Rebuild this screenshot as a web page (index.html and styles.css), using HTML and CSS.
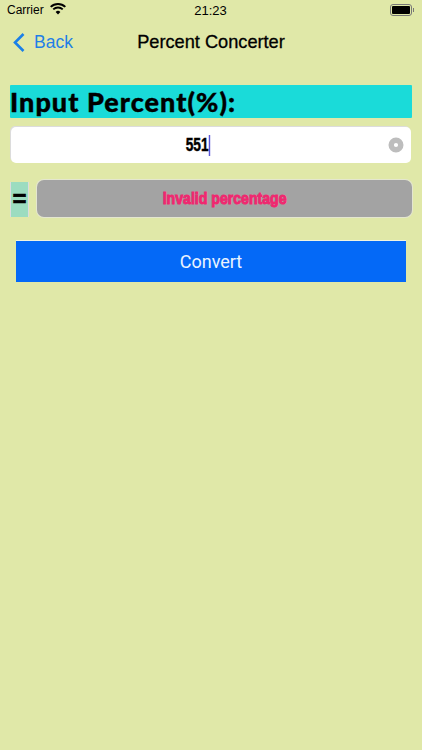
FILE: index.html
```html
<!DOCTYPE html>
<html lang="en">
<head>
  <meta charset="UTF-8">
  <meta name="viewport" content="width=device-width, initial-scale=1.0">
  <title>Percent Concerter</title>
  <link rel="stylesheet" href="styles.css">
</head>
<body>

<div class="status-bar">
  <div class="status-left">
    <span>Carrier</span>
    <svg class="wifi-icon" width="16" height="12" viewBox="0 0 16 12">
      <path d="M8 11.5 5.6 8.9a3.5 3.5 0 0 1 4.8 0z" fill="#000"/>
      <path d="M3.9 7.1a6 6 0 0 1 8.2 0l1.3-1.4a8 8 0 0 0-10.8 0z" fill="#000"/>
      <path d="M1.4 4.6a9.6 9.6 0 0 1 13.2 0L16 3.2A11.6 11.6 0 0 0 0 3.2z" fill="#000"/>
    </svg>
  </div>
  <span class="status-time">21:23</span>
  <div class="status-right">
    <div class="battery"><div class="battery-fill"></div></div>
    <div class="battery-cap"></div>
  </div>
</div>

<div class="nav-bar">
  <div class="nav-back">
    <svg width="14" height="21" viewBox="0 0 14 21">
      <path d="M11.5 2 3 10.5 11.5 19" fill="none" stroke="#1a7fe8" stroke-width="2.6"/>
    </svg>
    <span>Back</span>
  </div>
  <div class="nav-title">Percent Concerter</div>
</div>

<div class="content">
  <div class="input-label">Input Percent(%):</div>

  <div class="input-box">
    <span class="input-value">551<span class="caret"></span></span>
    <svg class="clear-icon" width="16" height="16" viewBox="0 0 16 16">
      <circle cx="8" cy="8" r="4.8" fill="none" stroke="#bdbdbd" stroke-width="5.4"/>
    </svg>
  </div>

  <div class="result-row">
    <div class="equals">=</div>
    <div class="result"><span class="result-text">Invalid percentage</span></div>
  </div>

  <div class="convert-btn">Convert</div>
</div>

</body>
</html>
```

FILE: styles.css
```css
body {
  font-family: 'Liberation Sans', Arial, sans-serif;
  background-color: #e0e8a8;
  margin: 0;
  height: 750px;
  overflow: hidden;
  color: #000;
}

.status-bar {
  height: 20px;
  padding: 0 8px 0 7px;
  display: grid;
  grid-template-columns: 1fr auto 1fr;
  align-items: center;
  font-size: 12px;
}

.status-left {
  display: flex;
  align-items: center;
  gap: 6px;
}

.wifi-icon {
  margin-top: -3px;
}

.status-time {
  font-weight: 500;
  font-size: 13px;
}

.status-right {
  display: flex;
  justify-content: flex-end;
  align-items: center;
}

.battery {
  width: 18px;
  height: 8px;
  border: 1px solid #777;
  border-radius: 3px;
  padding: 1px;
}

.battery-fill {
  height: 100%;
  background-color: #000;
  border-radius: 1px;
}

.battery-cap {
  width: 1px;
  height: 4px;
  background-color: #777;
  margin-left: 1px;
}

.nav-bar {
  height: 44px;
  position: relative;
  display: flex;
  align-items: center;
  justify-content: center;
}

.nav-back {
  position: absolute;
  left: 12px;
  top: 12px;
  display: flex;
  align-items: center;
  gap: 8px;
  font-size: 17.5px;
  color: #1f7fe6;
}

.nav-title {
  font-size: 18.2px;
  font-weight: 500;
  -webkit-text-stroke: 0.3px #000;
}

.content {
  padding: 21px 10px 0;
  display: flex;
  flex-direction: column;
}

.input-label {
  height: 33px;
  line-height: 34px;
  width: 402px;
  background-color: #1adbd9;
  border-radius: 1px;
  font-family: 'Lato', sans-serif;
  font-weight: 900;
  font-size: 27px;
  letter-spacing: 1.05px;
  -webkit-text-stroke: 0.4px #000;
  white-space: nowrap;
}

.input-box {
  margin-top: 9px;
  margin-left: 1px;
  width: 400px;
  height: 36px;
  background-color: #fff;
  border-radius: 5px;
  box-shadow: -1px -1px 0 #dcdcdc;
  display: flex;
  align-items: center;
  justify-content: center;
  position: relative;
}

.input-value {
  font-weight: 700;
  font-size: 19px;
  -webkit-text-stroke: 0.5px #000;
  display: flex;
  align-items: center;
  margin-right: 26px;
  transform: scaleX(0.72);
}

.caret {
  width: 2px;
  height: 21px;
  background-color: #5a55d8;
}

.clear-icon {
  position: absolute;
  right: 7px;
  top: 10px;
}

.result-row {
  margin-top: 17px;
  display: flex;
  align-items: center;
  gap: 9px;
}

.equals {
  margin-left: 1px;
  width: 17px;
  height: 35px;
  margin-top: 2px;
  background-color: #9cdcc0;
  box-shadow: -1px 0 0 #dcdcdc, 1px 0 0 #dcdcdc;
  text-align: center;
  line-height: 33px;
  font-size: 24px;
  font-weight: 700;
  -webkit-text-stroke: 0.6px #000;
}

.result {
  flex: 1;
  height: 37px;
  line-height: 37px;
  background-color: #a3a3a3;
  border-radius: 7px;
  box-shadow: 0 0 0 1px #e4e6d0;
  text-align: center;
}

.result-text {
  display: inline-block;
  font-weight: 700;
  font-size: 17px;
  color: #f02870;
  -webkit-text-stroke: 1px #f02870;
  transform: scaleX(0.83);
}

.convert-btn {
  margin: 24px 6px 0;
  height: 41px;
  line-height: 41px;
  width: 390px;
  background-color: #0469f7;
  color: #eaf4ff;
  text-align: center;
  font-size: 18px;
  font-family: 'Roboto', sans-serif;
  box-shadow: 0 -1px 0 #f2f4e0;
}
```
